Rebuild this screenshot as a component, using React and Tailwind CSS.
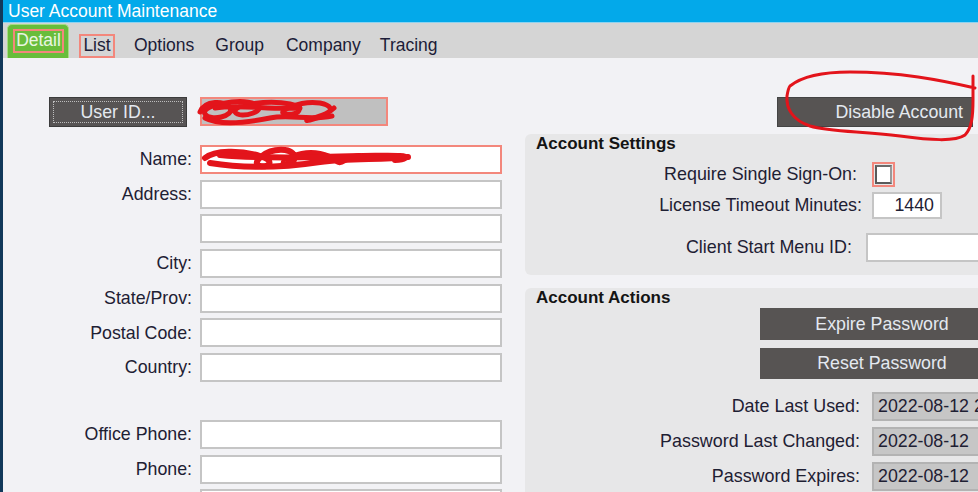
import React from "react";

const FONT = "font-['Liberation_Sans',Arial,sans-serif]";

function Field({ className = "", children }) {
  return (
    <div
      className={`h-[29px] w-[302px] border-2 border-[#c5c5c5] bg-white ${className}`}
    >
      {children}
    </div>
  );
}

function Row({ label, children }) {
  return (
    <div className="flex items-center">
      <div className="w-[189px] shrink-0 text-right text-[17.8px] text-[#1e2033]">
        {label}
      </div>
      <div className="ml-[8px]">{children}</div>
    </div>
  );
}

function DateRow({ label, value }) {
  return (
    <div className="flex items-center">
      <div className="w-[335px] shrink-0 text-right text-[17.9px] text-[#1e2033]">
        {label}
      </div>
      <div className="ml-[12px] flex h-[29px] w-[140px] shrink-0 items-center overflow-hidden whitespace-nowrap border-2 border-[#b3b3b3] bg-[#c6c6c6] pl-[4px] text-[17.8px] text-[#1e2033]">
        {value}
      </div>
    </div>
  );
}

export default function App() {
  return (
    <div
      className={`relative flex h-[492px] w-[978px] flex-col overflow-hidden border-l-[3px] border-[#12395a] bg-[#f2f2f5] ${FONT}`}
    >
      {/* Title bar */}
      <div className="flex h-[22px] shrink-0 items-center bg-[#03a9ea] pl-[5px] text-[17.5px] leading-[20px] text-white">
        User Account Maintenance
      </div>

      {/* Tab bar */}
      <div className="flex h-[36px] shrink-0 items-center border-t border-[#8fd3f0] bg-[#d5d5d5] pl-[4px] text-[17.5px] text-[#1c1c38]">
        <div className="flex h-[34px] w-[62px] items-start self-end rounded-t-[5px] border border-b-0 border-[#a6dc86] bg-[#68bd3b] pl-[5px] pt-[4px]">
          <div className="flex h-[24px] w-[51px] items-center justify-center border-2 border-[#f3877c] leading-none text-[#eaf6e2]">
            Detail
          </div>
        </div>
        <div className="ml-[10px] mt-[10px] flex h-[24px] w-[36px] items-center justify-center border-2 border-[#f3877c] leading-none">
          List
        </div>
        <div className="ml-[19px] mt-[10px]">Options</div>
        <div className="ml-[21px] mt-[10px]">Group</div>
        <div className="ml-[22px] mt-[10px]">Company</div>
        <div className="ml-[19px] mt-[10px]">Tracing</div>
      </div>

      {/* Content */}
      <div className="flex flex-1">
        {/* Left column */}
        <div className="w-[522px] shrink-0 pt-[39px]">
          <div className="flex items-start pl-[46px]">
            <div className="flex h-[30px] w-[138px] items-center justify-center border border-[#3c3c3c] bg-[#575454] p-[3px]">
              <div className="flex h-full w-full items-center justify-center border border-dotted border-[#bdbdbd] text-[17.8px] text-[#e4e9f0]">
                User ID...
              </div>
            </div>
            <div className="ml-[13px] h-[29px] w-[188px] border-2 border-[#f3877c] bg-[#c0c0c0]" />
          </div>

          <div className="mt-[18px] flex flex-col gap-[5.7px]">
            <Row label="Name:">
              <Field className="border-[#f3877c]" />
            </Row>
            <Row label="Address:">
              <Field />
            </Row>
            <Row label="">
              <Field />
            </Row>
            <Row label="City:">
              <Field />
            </Row>
            <Row label="State/Prov:">
              <Field />
            </Row>
            <Row label="Postal Code:">
              <Field />
            </Row>
            <Row label="Country:">
              <Field />
            </Row>
            <div className="h-[26.6px]" />
            <Row label="Office Phone:">
              <Field />
            </Row>
            <Row label="Phone:">
              <Field />
            </Row>
            <Row label="">
              <Field />
            </Row>
          </div>
        </div>

        {/* Right column */}
        <div className="w-[470px] shrink-0 pt-[39px]">
          <div className="ml-[252px] flex h-[30px] w-[196px] items-center justify-end border border-[#444] bg-[#575453] pr-[9px] text-[17.8px] text-[#e4e9f0]">
            Disable Account
          </div>

          <div className="mt-[7px] h-[141px] w-[470px] rounded-[6px] bg-[#e7e7e8]">
            <div className="pl-[11px] text-[17px] font-bold leading-[20px] text-[#141414]">
              Account Settings
            </div>
            <div className="mt-[8px] flex h-[25px] items-center">
              <div className="w-[332px] shrink-0 text-right text-[17.9px] text-[#1e2033]">
                Require Single Sign-On:
              </div>
              <div className="ml-[15px] flex h-[25px] w-[23px] items-center justify-center border-2 border-[#f3877c]">
                <div className="h-[19px] w-[17px] border-2 border-[#5a5a5a] border-r-[#9a9a9a] border-t-[#6a6a6a] bg-white" />
              </div>
            </div>
            <div className="mt-[5px] flex items-center">
              <div className="w-[337px] shrink-0 text-right text-[17.9px] text-[#1e2033]">
                License Timeout Minutes:
              </div>
              <div className="ml-[10px] flex h-[27px] w-[70px] items-center justify-end border-2 border-[#c5c5c5] bg-white pr-[6px] text-[17.8px] text-[#1e2033]">
                1440
              </div>
            </div>
            <div className="mt-[14px] flex items-center">
              <div className="w-[327px] shrink-0 text-right text-[17.9px] text-[#1e2033]">
                Client Start Menu ID:
              </div>
              <div className="ml-[14px] h-[29px] w-[130px] shrink-0 border-2 border-[#c5c5c5] bg-white" />
            </div>
          </div>

          <div className="mt-[13px] h-[230px] w-[470px] rounded-[6px] bg-[#e7e7e8]">
            <div className="pl-[11px] text-[17px] font-bold leading-[20px] text-[#141414]">
              Account Actions
            </div>
            <div className="ml-[235px] flex h-[32px] w-[244px] items-center justify-center bg-[#575453] text-[17.8px] text-[#e4e9f0]">
              Expire Password
            </div>
            <div className="ml-[235px] mt-[8px] flex h-[31px] w-[244px] items-center justify-center bg-[#575453] text-[17.8px] text-[#e4e9f0]">
              Reset Password
            </div>
            <div className="mt-[13px] flex flex-col gap-[6px]">
              <DateRow label="Date Last Used:" value="2022-08-12 2:15 PM" />
              <DateRow label="Password Last Changed:" value="2022-08-12" />
              <DateRow label="Password Expires:" value="2022-08-12" />
            </div>
          </div>
        </div>
      </div>

      {/* Red annotation overlay */}
      <svg
        className="pointer-events-none absolute left-[-3px] top-0"
        width="978"
        height="492"
        viewBox="0 0 978 492"
        fill="none"
      >
        <g stroke="#e3141b" strokeLinecap="round" strokeLinejoin="round">
          <path
            strokeWidth="5"
            d="M200 112 C205 100 225 100 230 108 C235 116 210 122 205 114 C200 105 240 98 255 104 C270 110 240 120 235 112 C232 104 270 100 290 104 C305 107 300 116 285 114 C275 112 300 100 320 103 C330 105 335 110 325 114 C315 118 300 122 310 120 C320 118 330 112 334 108"
          />
          <path
            strokeWidth="5"
            d="M205 118 C220 126 250 122 270 118 C290 114 310 121 332 116 M215 108 C240 104 270 110 300 108"
          />
          <path
            strokeWidth="6"
            d="M205 158 C215 150 240 150 260 156 C275 160 270 168 260 166 C250 164 265 148 285 150 C300 152 295 166 285 164 C278 162 300 150 320 154 C340 158 335 166 345 160 C355 154 380 156 400 156 C410 156 405 160 395 160"
          />
          <path
            strokeWidth="6"
            d="M210 163 C240 168 280 168 320 162 C350 158 380 160 408 157 M220 155 C250 158 300 158 360 156"
          />
          <path
            strokeWidth="3"
            d="M790 86 C800 78 820 72 850 72 C900 72 940 80 975 88 M973 76 L973 100 C973 115 972 128 965 135 C955 142 930 140 900 136 C860 131 830 132 810 126 C792 120 786 108 787 96 C788 90 789 87 790 86"
          />
        </g>
      </svg>
    </div>
  );
}
